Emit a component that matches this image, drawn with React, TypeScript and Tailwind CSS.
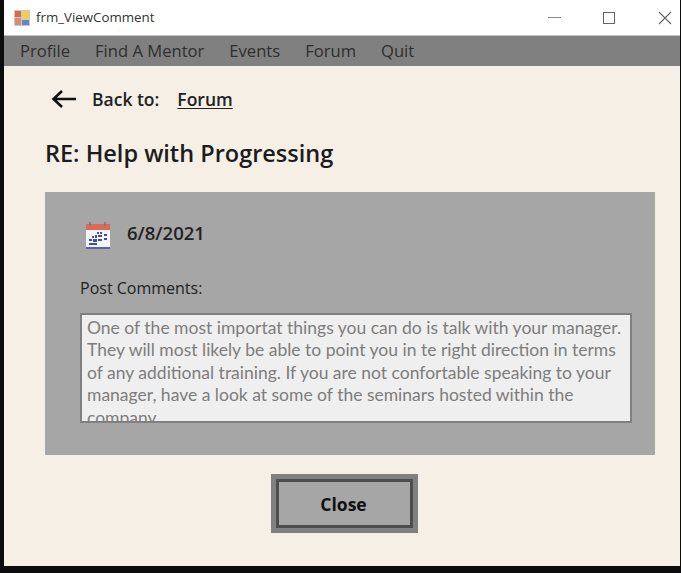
const MENU = ['Profile', 'Find A Mentor', 'Events', 'Forum', 'Quit'];

const COMMENT_LINES = [
  'One of the most importat things you can do is talk with your manager.',
  'They will most likely be able to point you in te right direction in terms',
  'of any additional training. If you are not confortable speaking to your',
  'manager, have a look at some of the seminars hosted within the',
  'company.',
];

function FormIcon() {
  return (
    <svg width="16" height="16" viewBox="0 0 16 16" className="shrink-0">
      <rect x="0" y="0" width="16" height="16" fill="#c9c9d6" />
      <rect x="1" y="1" width="6" height="6" fill="#d9694a" />
      <rect x="8" y="1" width="7" height="8" fill="#f0cf4c" />
      <rect x="1" y="8" width="6" height="7" fill="#d88a72" />
      <rect x="8" y="10" width="7" height="5" fill="#5f86cf" />
    </svg>
  );
}

function CalendarIcon() {
  return (
    <svg width="28" height="29" viewBox="0 0 28 29" className="shrink-0 mt-[5px]">
      <rect x="2" y="3" width="24" height="25" fill="#f4f4fa" />
      <rect x="2" y="3" width="24" height="6" fill="#dc6a58" />
      <rect x="2" y="26" width="24" height="2" fill="#5a64ad" />
      <path d="M6 1v4M21 1v4" stroke="#8a6f5c" strokeWidth="1.5" />
      <g fill="#3d4f9e">
        <rect x="13" y="11" width="2" height="2" />
        <rect x="16" y="11" width="2" height="2" />
        <rect x="20" y="13" width="3" height="2" />
        <rect x="8" y="15" width="2" height="2" />
        <rect x="11" y="14" width="2" height="3" />
        <rect x="14" y="14" width="4" height="2" />
        <rect x="20" y="17" width="3" height="2" />
        <rect x="5" y="18" width="3" height="2" />
        <rect x="9" y="18" width="4" height="3" />
        <rect x="14" y="18" width="4" height="2" />
        <rect x="5" y="22" width="8" height="2" />
      </g>
    </svg>
  );
}

function BackArrow() {
  return (
    <svg width="26" height="20" viewBox="0 0 26 20" className="shrink-0">
      <path d="M25 10H2.5M11 2l-8.5 8 8.5 8" fill="none" stroke="#111" strokeWidth="2.6" />
    </svg>
  );
}

export default function App() {
  return (
    <div className="w-[681px] h-[573px] bg-[#0c0c0c] overflow-hidden font-['Open_Sans','Noto_Sans',sans-serif]">
      <div className="ml-[4px] w-[676px] h-[566px] flex flex-col bg-[#f6efe6]">
        {/* title bar */}
        <div className="h-[35px] bg-white flex items-center pl-[10px] shrink-0">
          <FormIcon />
          <span className="ml-[6px] text-[13.3px] text-[#333]">frm_ViewComment</span>
          <div className="ml-auto flex items-center">
            <div className="w-[13px] h-[1.5px] bg-[#8a8a8a] mr-[42px]" />
            <div className="w-[12px] h-[12px] border border-[#666] mr-[43px]" />
            <svg width="14" height="14" viewBox="0 0 14 14" className="mr-[8px]">
              <path d="M1 1l12 12M13 1L1 13" stroke="#666" strokeWidth="1.1" />
            </svg>
          </div>
        </div>

        {/* menu */}
        <div className="h-[31px] bg-[#808080] border-t border-[#c4c4c4] flex items-center pl-[16px] gap-[25px] text-[16.6px] text-[#2e2e2e] shrink-0">
          {MENU.map(item => (
            <span key={item}>{item}</span>
          ))}
        </div>

        {/* content */}
        <div className="flex-1 flex flex-col pl-[41px] pr-[25px]">
          <div className="flex items-center h-[32px] mt-[17px] pl-[6px] text-[#222] text-[17.5px] font-semibold">
            <BackArrow />
            <span className="ml-[15px]">Back to:</span>
            <span className="ml-[18px] underline underline-offset-2">Forum</span>
          </div>

          <h1 className="mt-[22px] h-[32px] text-[23.5px] leading-[32px] font-semibold text-[#1c1c1c]">RE: Help with Progressing</h1>

          <div className="mt-[23px] w-[610px] h-[263px] bg-[#a6a6a6] pt-[26px] pl-[35px] shrink-0">
            <div className="flex items-center h-[30px] pl-[4px]">
              <CalendarIcon />
              <span className="ml-[15px] text-[18.5px] font-semibold text-[#222]">6/8/2021</span>
            </div>
            <p className="mt-[29px] h-[22px] text-[16px] leading-[22px] text-[#222]">Post Comments:</p>
            <div className="mt-[14px] w-[552px] h-[110px] bg-[#efefef] border-2 border-[#808080] pl-[5px] pt-[2px] overflow-hidden font-['Lato',sans-serif] text-[17.5px] leading-[22.4px] text-[#7d7d7d] whitespace-nowrap">
              {COMMENT_LINES.map(line => (
                <div key={line}>{line}</div>
              ))}
            </div>
          </div>

          <div className="mt-[19px] ml-[226px] w-[147px] h-[59px] border-[5px] border-[#808080] shrink-0">
            <button className="w-full h-full pt-[2px] pr-[2px] bg-[#a6a6a6] border-[3px] border-[#4d4d4d] text-[17.5px] font-bold text-[#111]">
              Close
            </button>
          </div>
        </div>
      </div>
    </div>
  );
}
